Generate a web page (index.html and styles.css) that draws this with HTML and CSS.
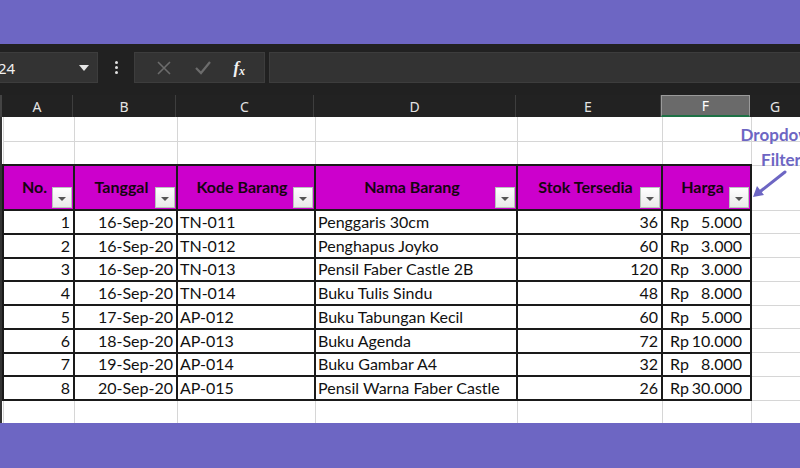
FILE: index.html
```html
<!DOCTYPE html>
<html>
<head>
<meta charset="utf-8">
<link rel="stylesheet" href="styles.css">
</head>
<body>
<div class="frame">
  <div class="band"></div>
  <div class="toolbar">
    <div class="namebox"><span>24</span><svg class="caret" width="10" height="6" viewBox="0 0 10 6"><path d="M0 0H10L5 6Z" fill="#e6e6e6"/></svg></div>
    <div class="dots"><i></i><i></i><i></i></div>
    <div class="fbtns">
      <svg width="16" height="16" viewBox="0 0 16 16"><path d="M2 2L14 14M14 2L2 14" stroke="#6c6c6c" stroke-width="1.6"/></svg>
      <svg width="18" height="16" viewBox="0 0 18 16"><path d="M2 8L7 13L16 2" stroke="#6c6c6c" stroke-width="2.2" fill="none"/></svg>
      <span class="fx">f<sub>x</sub></span>
    </div>
    <div class="finput"></div>
  </div>
  <div class="colheads">
    <div class="ch a">A</div>
    <div class="ch b">B</div>
    <div class="ch c">C</div>
    <div class="ch d">D</div>
    <div class="ch e">E</div>
    <div class="ch f sel">F</div>
    <div class="ch g">G</div>
  </div>
  <div class="sheet">
    <table class="grid">
      <colgroup>
        <col class="w-a"><col class="w-b"><col class="w-c"><col class="w-d"><col class="w-e"><col class="w-f"><col class="w-g">
      </colgroup>
      <tr class="r-empty"><td></td><td></td><td></td><td></td><td></td><td></td><td></td></tr>
      <tr class="r-empty"><td></td><td></td><td></td><td></td><td></td><td></td><td></td></tr>
      <tr class="r-head">
        <th>No.<span class="flt"></span></th>
        <th>Tanggal<span class="flt"></span></th>
        <th>Kode Barang<span class="flt"></span></th>
        <th>Nama Barang<span class="flt"></span></th>
        <th>Stok Tersedia<span class="flt"></span></th>
        <th>Harga<span class="flt"></span></th>
        <td class="gcell"></td>
      </tr>
      <tr class="r-data"><td class="num">1</td><td class="num">16-Sep-20</td><td>TN-011</td><td>Penggaris 30cm</td><td class="num">36</td><td class="rp"><span>Rp</span><span>5.000</span></td><td class="gcell"></td></tr>
      <tr class="r-data"><td class="num">2</td><td class="num">16-Sep-20</td><td>TN-012</td><td>Penghapus Joyko</td><td class="num">60</td><td class="rp"><span>Rp</span><span>3.000</span></td><td class="gcell"></td></tr>
      <tr class="r-data"><td class="num">3</td><td class="num">16-Sep-20</td><td>TN-013</td><td>Pensil Faber Castle 2B</td><td class="num">120</td><td class="rp"><span>Rp</span><span>3.000</span></td><td class="gcell"></td></tr>
      <tr class="r-data"><td class="num">4</td><td class="num">16-Sep-20</td><td>TN-014</td><td>Buku Tulis Sindu</td><td class="num">48</td><td class="rp"><span>Rp</span><span>8.000</span></td><td class="gcell"></td></tr>
      <tr class="r-data"><td class="num">5</td><td class="num">17-Sep-20</td><td>AP-012</td><td>Buku Tabungan Kecil</td><td class="num">60</td><td class="rp"><span>Rp</span><span>5.000</span></td><td class="gcell"></td></tr>
      <tr class="r-data"><td class="num">6</td><td class="num">18-Sep-20</td><td>AP-013</td><td>Buku Agenda</td><td class="num">72</td><td class="rp"><span>Rp</span><span>10.000</span></td><td class="gcell"></td></tr>
      <tr class="r-data"><td class="num">7</td><td class="num">19-Sep-20</td><td>AP-014</td><td>Buku Gambar A4</td><td class="num">32</td><td class="rp"><span>Rp</span><span>8.000</span></td><td class="gcell"></td></tr>
      <tr class="r-data"><td class="num">8</td><td class="num">20-Sep-20</td><td>AP-015</td><td>Pensil Warna Faber Castle</td><td class="num">26</td><td class="rp"><span>Rp</span><span>30.000</span></td><td class="gcell"></td></tr>
      <tr class="r-empty"><td></td><td></td><td></td><td></td><td></td><td></td><td></td></tr>
    </table>
    <div class="note">Dropdown<br>Filter</div>
    <svg class="arrow" width="40" height="32" viewBox="0 0 40 32"><path d="M34 4L6 26" stroke="#6d66c3" stroke-width="3" stroke-linecap="round"/><path d="M2 29L6 18L13 27Z" fill="#6d66c3"/></svg>
  </div>
  <div class="band bottom"></div>
</div>
</body>
</html>
```
FILE: styles.css
```css
* { box-sizing: border-box; }
html, body { margin: 0; padding: 0; }
body { width: 800px; height: 468px; overflow: hidden; background: #fff; }
.frame { width: 800px; height: 468px; display: flex; flex-direction: column; overflow: hidden; }
.band { height: 44px; background: #6d66c3; flex: none; }
.band.bottom { height: 45px; }

.toolbar { height: 51px; background: #212121; display: flex; align-items: flex-start; padding-top: 8px; flex: none; }
.namebox { height: 31px; background: #333; border: 1px solid #3d3d3d; border-left: none; display: flex; align-items: center; justify-content: space-between; padding: 0 8px 0 0; margin-left: -10px; width: 108px; font-family: "Noto Sans", sans-serif; font-size: 15px; color: #f0f0f0; }
.namebox span { margin-left: 8px; }
.dots { width: 36px; height: 31px; display: flex; flex-direction: column; align-items: center; justify-content: center; gap: 2px; }
.dots i { width: 3px; height: 3px; background: #e0e0e0; border-radius: 50%; display: block; }
.fbtns { width: 131px; height: 31px; background: #333; border: 1px solid #3d3d3d; display: flex; align-items: center; justify-content: space-around; padding: 0 8px 0 10px; }
.fx { font-family: "Liberation Serif", serif; font-style: italic; font-weight: bold; color: #f2f2f2; font-size: 17px; line-height: 1; }
.fx sub { font-size: 12px; vertical-align: -2px; }
.finput { flex: 1; margin-left: 4px; height: 31px; background: #333; border: 1px solid #3d3d3d; border-right: none; }

.colheads { height: 22px; background: #222; display: flex; flex: none; border-left: 2px solid #444; }
.ch { height: 22px; display: flex; align-items: center; justify-content: center; font-family: "Noto Sans", sans-serif; font-size: 14px; color: #e4e4e4; border-right: 1px solid #3e3e3e; }
.ch.a { width: 71px; } .ch.b { width: 103px; } .ch.c { width: 138px; } .ch.d { width: 202px; }
.ch.e { width: 145px; } .ch.f { width: 89px; } .ch.g { flex: 1; border-right: none; }
.ch.sel { background: #6a6a6a; border: 1px solid #9a9a9a; border-bottom: 2px solid #1e7145; color: #fff; }

.sheet { position: relative; flex: 1; overflow: hidden; border-left: 2px solid #333; }
.grid { border-collapse: collapse; table-layout: fixed; width: 806px; font-family: "Lato", "Open Sans", sans-serif; font-size: 16px; color: #111; }
.w-a { width: 71px; } .w-b { width: 103px; } .w-c { width: 138px; } .w-d { width: 202px; }
.w-e { width: 145px; } .w-f { width: 89px; } .w-g { width: 58px; }
.grid td, .grid th { border: 1px solid #d6d6d6; padding: 0 3px; white-space: nowrap; overflow: hidden; line-height: 20px; }
.r-empty td { height: 24px; }
.r-empty:first-child td { border-top: none; }
.r-head th { height: 45px; background: #cc00cc; border: 2px solid #1a1a1a; font-weight: bold; color: #150410; text-align: center; position: relative; padding: 0 8px 2px 0; }
.r-head .gcell, .r-data .gcell { border-left: 2px solid #1a1a1a; }
.r-head .gcell { border-bottom: none; }
.r-data td { height: 23.75px; border: 2px solid #1a1a1a; padding: 0 3px 0 2px; }
.r-data td.gcell { border-top: 1px solid #d6d6d6; border-bottom: 1px solid #d6d6d6; border-right: none; }
.num { text-align: right; }
.grid td.rp { padding: 0 8px 0 7px; }
.rp span:first-child { float: left; }
.rp span:last-child { float: right; }
.r-empty:last-child td { border-top: 2px solid #1a1a1a; }
.r-empty:last-child td:last-child { border-top: 1px solid #d6d6d6; }

.flt { position: absolute; right: 1px; bottom: 1px; width: 20px; height: 21px; background: linear-gradient(#ffffff, #e9e9e9); border: 1px solid #b8c4bc; }
.flt::after { content: ""; position: absolute; left: 5px; top: 9px; border-left: 4px solid transparent; border-right: 4px solid transparent; border-top: 4px solid #555; }

.note { position: absolute; left: 733px; top: 5px; width: 92px; text-align: center; font-family: "Lato", sans-serif; font-weight: bold; font-size: 17px; line-height: 25px; color: #6d66c3; }
.arrow { position: absolute; left: 749px; top: 51px; }
```
